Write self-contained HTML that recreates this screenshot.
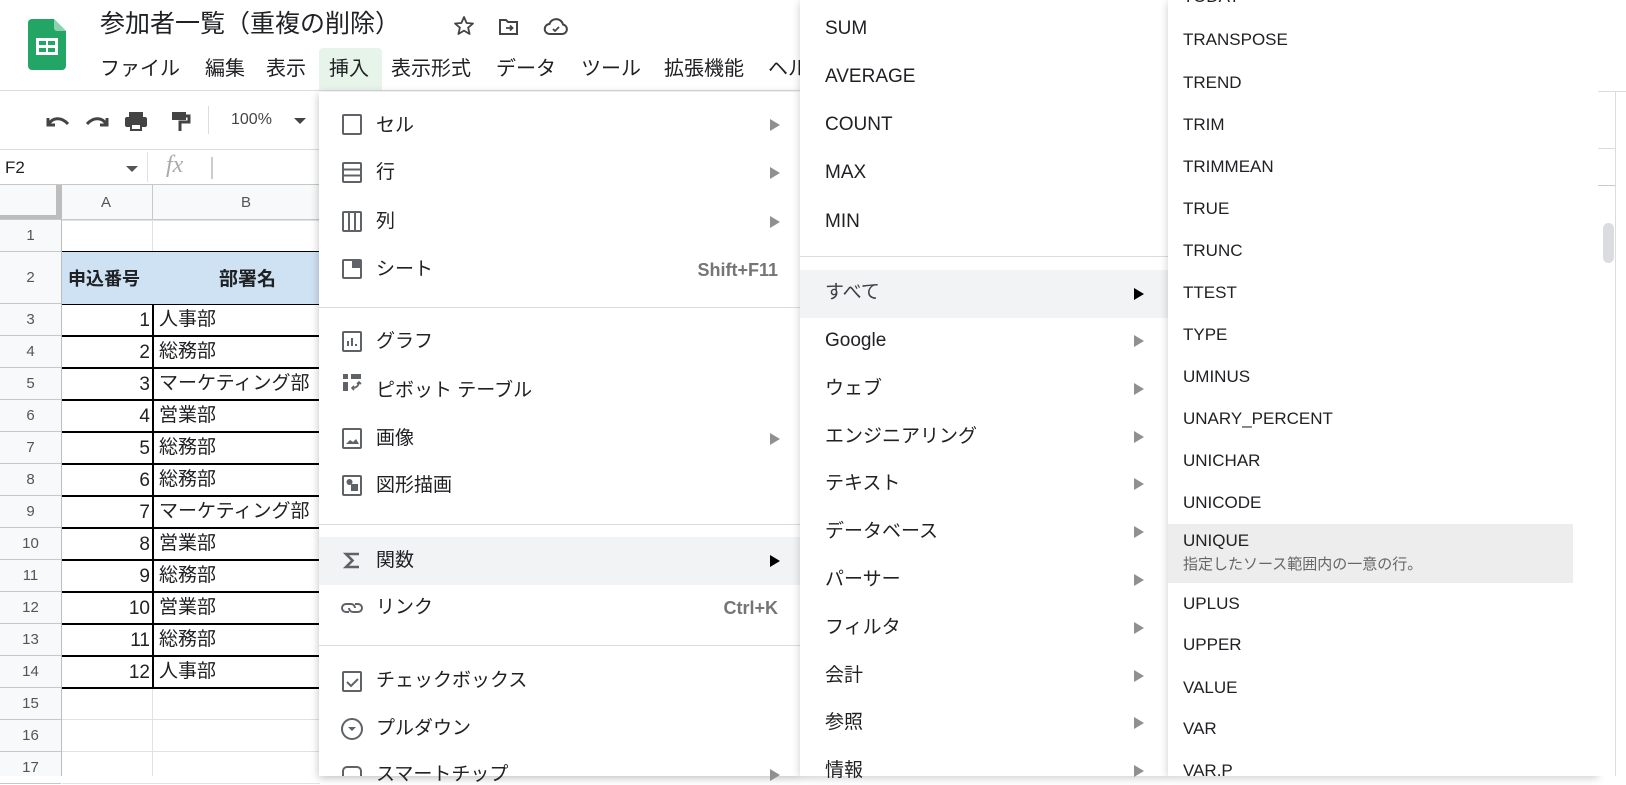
<!DOCTYPE html>
<html><head><meta charset="utf-8"><style>
*{margin:0;padding:0;box-sizing:border-box}
body{width:1626px;height:776px;overflow:hidden;background:#fff;font-family:"Liberation Sans","Noto Sans CJK JP",sans-serif;color:#202124;position:relative}
.a{position:absolute}
.t{position:absolute;white-space:nowrap;line-height:1}
.m1 .t,.m2 .t{font-size:19px}
.m3 .t{font-size:17px;color:#202124}
.arr{position:absolute;width:0;height:0;border-top:6px solid transparent;border-bottom:6px solid transparent;border-left:10px solid #909090}
.sep{position:absolute;left:0;right:0;height:1px;background:#dadce0}
.cell{position:absolute;font-size:19px;line-height:1;white-space:nowrap}
.mb{font-size:20px;top:59px}
</style></head><body>

<!-- header -->
<svg class="a" style="left:28px;top:19px" width="38" height="51" viewBox="0 0 38 51">
<path d="M4 0h22l12 12v35a4 4 0 0 1-4 4H4a4 4 0 0 1-4-4V4a4 4 0 0 1 4-4z" fill="#23a566"/>
<path d="M26 0l12 12H29a3 3 0 0 1-3-3z" fill="#8ed1b1"/>
<rect x="8" y="19" width="22" height="17" fill="#fff"/>
<rect x="11" y="22" width="7" height="4" fill="#23a566"/><rect x="20" y="22" width="7" height="4" fill="#23a566"/>
<rect x="11" y="29" width="7" height="4" fill="#23a566"/><rect x="20" y="29" width="7" height="4" fill="#23a566"/>
</svg>
<div class="t" style="left:100px;top:12px;font-size:25px;color:#202124">参加者一覧（重複の削除）</div>
<svg class="a" style="left:452px;top:14px" width="24" height="24" viewBox="0 0 24 24"><path d="M12 3l2.6 6 6.4.5-4.9 4.2 1.5 6.3L12 16.6 6.4 20l1.5-6.3L3 9.5l6.4-.5z" fill="none" stroke="#444" stroke-width="1.8" stroke-linejoin="round"/></svg>
<svg class="a" style="left:497px;top:15px" width="24" height="24" viewBox="0 0 24 24"><path d="M3 5h6l2 2h9v12H3z" fill="none" stroke="#444" stroke-width="2"/><path d="M9 13h6m-2-2.5l2.5 2.5-2.5 2.5" fill="none" stroke="#444" stroke-width="1.8"/></svg>
<svg class="a" style="left:543px;top:15px" width="26" height="24" viewBox="0 0 26 24"><path d="M7 19a5 5 0 0 1-.5-10A7 7 0 0 1 20 9.5 4.8 4.8 0 0 1 19.5 19z" fill="none" stroke="#444" stroke-width="2"/><path d="M10 14l2 2 4-4" fill="none" stroke="#444" stroke-width="1.8"/></svg>
<div class="a" style="left:319px;top:48px;width:63px;height:43px;background:#e6f4ea;border-radius:4px 4px 0 0"></div>
<div class="t mb" style="left:100px">ファイル</div>
<div class="t mb" style="left:205px">編集</div>
<div class="t mb" style="left:266px">表示</div>
<div class="t mb" style="left:329px">挿入</div>
<div class="t mb" style="left:391px">表示形式</div>
<div class="t mb" style="left:496px">データ</div>
<div class="t mb" style="left:581px">ツール</div>
<div class="t mb" style="left:664px">拡張機能</div>
<div class="t mb" style="left:768px">ヘル</div>
<div class="a" style="left:0;top:90px;width:1626px;height:1px;background:#dadce0"></div>
<div class="a" style="left:1612px;top:30px;width:30px;height:30px;border-radius:50%;background:#f1f1e8"></div>

<!-- toolbar -->
<svg class="a" style="left:44px;top:108px" width="150" height="26" viewBox="0 0 150 26">
<path d="M4 10v7h7M5 16c3-6 12-8 19 0" fill="none" stroke="#444" stroke-width="3"/>
<path d="M63 10v7h-7M62 16c-3-6-12-8-19 0" fill="none" stroke="#444" stroke-width="3"/>
<rect x="85" y="4" width="14" height="5" fill="#444"/><rect x="81" y="9" width="22" height="10" rx="2" fill="#444"/><rect x="86" y="16" width="12" height="7" fill="#444"/><rect x="88" y="17" width="8" height="4" fill="#fff"/>
<rect x="128" y="4" width="14" height="8" fill="#444"/><path d="M142 8h3v6h-9v9" fill="none" stroke="#444" stroke-width="3"/>
</svg>
<div class="a" style="left:208px;top:106px;width:1px;height:28px;background:#dadce0"></div>
<div class="t" style="left:231px;top:112px;font-size:16px;color:#444">100%</div>
<div class="a" style="left:294px;top:118px;border-top:6px solid #444;border-left:6px solid transparent;border-right:6px solid transparent"></div>
<div class="a" style="left:0;top:149px;width:320px;height:1px;background:#dadce0"></div>
<div class="t" style="left:5px;top:159px;font-size:17px">F2</div>
<div class="a" style="left:126px;top:166px;border-top:6px solid #555;border-left:6px solid transparent;border-right:6px solid transparent"></div>
<div class="a" style="left:147px;top:152px;width:1px;height:30px;background:#e0e0e0"></div>
<div class="t" style="left:166px;top:153px;font-size:24px;color:#aaa;font-family:'Liberation Serif',serif;font-style:italic">fx</div>
<div class="a" style="left:211px;top:157px;width:2px;height:22px;background:#ccc"></div>
<div class="a" style="left:0;top:184px;width:320px;height:1px;background:#c8c8c8"></div>

<!-- grid -->
<div class="a" style="left:0;top:185px;width:320px;height:35px;background:#f8f9fa"></div>
<div class="a" style="left:0;top:185px;width:62px;height:591px;background:#f8f9fa"></div>
<div class="a" style="left:56px;top:185px;width:5px;height:35px;background:#bdbdbd"></div>
<div class="a" style="left:0;top:215px;width:61px;height:5px;background:#bdbdbd"></div>
<div class="a" style="left:61px;top:185px;width:1px;height:591px;background:#bdbdbd"></div>
<div class="a" style="left:152px;top:185px;width:1px;height:35px;background:#c8c8c8"></div>
<div class="a" style="left:0;top:219px;width:320px;height:1px;background:#c8c8c8"></div>
<div class="t" style="left:101px;top:195px;font-size:15px;color:#555">A</div>
<div class="t" style="left:241px;top:195px;font-size:15px;color:#555">B</div>
<div id="rows"></div>
<div class="a" style="left:62px;top:252px;width:258px;height:52px;background:#cfe2f3"></div>
<div class="cell" style="left:68px;top:270px;font-weight:bold;font-size:18px">申込番号</div>
<div class="cell" style="left:219px;top:270px;font-weight:bold">部署名</div>

<script>
(function(){
var h='';
function rh(n,top,ht){h+='<div class="t" style="left:0;width:61px;text-align:center;top:'+(top+ht/2-8)+'px;font-size:15px;color:#555">'+n+'</div>';
h+='<div class="a" style="left:0;top:'+(top+ht-1)+'px;width:61px;height:1px;background:#c8c8c8"></div>';}
rh(1,220,32);rh(2,252,52);
var names=['人事部','総務部','マーケティング部','営業部','総務部','総務部','マーケティング部','営業部','総務部','営業部','総務部','人事部'];
for(var i=0;i<15;i++){var top=304+i*32;rh(i+3,top,32);
 if(i<12){h+='<div class="cell" style="right:1476px;top:'+(top+7)+'px">'+(i+1)+'</div><div class="cell" style="left:159px;top:'+(top+6)+'px">'+names[i]+'</div>';}
 else h+='<div class="a" style="left:62px;top:'+(top+31)+'px;width:258px;height:1px;background:#e2e2e2"></div>';
}
h+='<div class="a" style="left:62px;top:220px;width:258px;height:1px;background:#e2e2e2"></div>';
h+='<div class="a" style="left:152px;top:220px;width:1px;height:32px;background:#e2e2e2"></div>';
h+='<div class="a" style="left:152px;top:688px;width:1px;height:88px;background:#e2e2e2"></div>';
for(var k=0;k<14;k++){var y=k==0?251:(k==1?303:303+(k-1)*32);h+='<div class="a" style="left:62px;top:'+y+'px;width:258px;height:2px;background:#000"></div>';}
h+='<div class="a" style="left:62px;top:687px;width:258px;height:2px;background:#000"></div>';
h+='<div class="a" style="left:152px;top:252px;width:2px;height:436px;background:#000"></div>';
document.getElementById('rows').outerHTML=h;
})();
</script>

<!-- menu 1 -->
<div class="a m1" style="left:319px;top:92px;width:481px;height:684px;background:#fff;box-shadow:0 2px 8px rgba(0,0,0,.25)">
<div class="sep" style="top:215px"></div>
<div class="sep" style="top:432px"></div>
<div class="a" style="left:0;top:445px;width:481px;height:48px;background:#f1f3f4"></div>
<div class="sep" style="top:553px"></div>
<svg class="a" style="left:22px;top:0" width="24" height="684" viewBox="0 0 24 684" fill="none" stroke="#5f6368" stroke-width="2">
<rect x="2" y="23" width="18" height="19" rx="1"/>
<rect x="2" y="71" width="18" height="19" rx="1"/><path d="M2 77.5h18M2 83.5h18"/>
<rect x="2" y="120" width="18" height="19" rx="1"/><path d="M8 120v19M14 120v19"/>
<rect x="2" y="168" width="18" height="18" rx="1"/><rect x="11" y="169" width="8" height="7" fill="#5f6368" stroke="none"/>
<rect x="2" y="240" width="18" height="19" rx="1"/><path d="M7 254v-5M11 254v-8M15 254v-2" stroke-width="2"/>
<path d="M2 282h5v5H2zM10 282h10v5H10zM2 290h5v9H2z" fill="#5f6368" stroke="none"/><path d="M11 296c3 0 6-1 7-5M16 292l2-2 2 2M13 294l-2 2 2 2" stroke-width="1.6"/>
<rect x="2" y="337" width="18" height="19" rx="1"/><path d="M5 352l4-4 3 2 3-3 3 5z" fill="#5f6368" stroke="none"/>
<rect x="2" y="384" width="18" height="19" rx="1"/><circle cx="8.5" cy="390" r="3" fill="#5f6368" stroke="none"/><rect x="10" y="392" width="7" height="7" fill="#5f6368" stroke="none"/>
<path d="M18 462H5l6.5 6.5L5 475h13" stroke-width="2.6"/>
<path d="M8 520H5a4 4 0 0 1 0-8h5a4 4 0 0 1 4 4M14 512h3a4 4 0 0 1 0 8h-5a4 4 0 0 1-4-4"/>
<rect x="2" y="580" width="18" height="19" rx="1"/><path d="M6 590l4 4 7-7"/>
<circle cx="11" cy="637" r="10"/><path d="M7 635h8l-4 4z" fill="#5f6368" stroke="none"/>
<rect x="2" y="675" width="18" height="14" rx="4"/>
</svg>
<div class="t" style="left:57px;top:24px">セル</div><div class="arr" style="left:451px;top:27px"></div>
<div class="t" style="left:57px;top:71px">行</div><div class="arr" style="left:451px;top:75px"></div>
<div class="t" style="left:57px;top:120px">列</div><div class="arr" style="left:451px;top:124px"></div>
<div class="t" style="left:57px;top:168px">シート</div><div class="t" style="right:22px;top:169px;font-weight:bold;color:#757575;font-size:18px">Shift+F11</div>
<div class="t" style="left:57px;top:240px">グラフ</div>
<div class="t" style="left:57px;top:289px">ピボット テーブル</div>
<div class="t" style="left:57px;top:337px">画像</div><div class="arr" style="left:451px;top:341px"></div>
<div class="t" style="left:57px;top:384px">図形描画</div>
<div class="t" style="left:57px;top:459px">関数</div><div class="arr" style="left:451px;top:463px;border-left-color:#000"></div>
<div class="t" style="left:57px;top:506px">リンク</div><div class="t" style="right:22px;top:507px;font-weight:bold;color:#757575;font-size:18px">Ctrl+K</div>
<div class="t" style="left:57px;top:579px">チェックボックス</div>
<div class="t" style="left:57px;top:627px">プルダウン</div>
<div class="t" style="left:57px;top:673px">スマートチップ</div><div class="arr" style="left:451px;top:677px"></div>
</div>

<!-- menu 2 -->
<div class="a m2" style="left:800px;top:0;width:368px;height:776px;background:#fff;box-shadow:0 2px 8px rgba(0,0,0,.2)">
<div class="t" style="left:25px;top:19px">SUM</div>
<div class="t" style="left:25px;top:67px">AVERAGE</div>
<div class="t" style="left:25px;top:115px">COUNT</div>
<div class="t" style="left:25px;top:163px">MAX</div>
<div class="t" style="left:25px;top:212px">MIN</div>
<div class="sep" style="top:256px"></div>
<div class="a" style="left:0;top:270px;width:368px;height:48px;background:#f1f3f4"></div>
<div class="t" style="left:25px;top:283px;color:#3c4043">すべて</div><div class="arr" style="left:334px;top:288px;border-left-color:#000"></div>
<div id="m2"></div>
</div>

<!-- menu 3 -->
<div class="a m3" style="left:1168px;top:0;width:430px;height:776px;background:#fff;box-shadow:0 2px 8px rgba(0,0,0,.2)">
<div class="a" style="left:0;top:524px;width:405px;height:59px;background:#ededed"></div>
<div id="m3"></div>
<div class="t" style="left:15px;top:532px">UNIQUE</div>
<div class="t" style="left:15px;top:557px;font-size:15px;color:#666">指定したソース範囲内の一意の行。</div>
</div>
<div class="a" style="left:1598px;top:0;width:28px;height:776px;background:#fff"></div>
<div class="a" style="left:1598px;top:91px;width:28px;height:1px;background:#dadce0"></div>
<div class="a" style="left:1615px;top:91px;width:1px;height:685px;background:#dadce0"></div>
<div class="a" style="left:1603px;top:223px;width:11px;height:40px;border-radius:6px;background:#dadce0"></div>
<div class="a" style="left:1598px;top:148px;width:17px;height:1px;background:#dadce0"></div>
<div class="a" style="left:1598px;top:185px;width:17px;height:1px;background:#c8c8c8"></div>

<script>
var a=['Google','ウェブ','エンジニアリング','テキスト','データベース','パーサー','フィルタ','会計','参照','情報'],h='';
for(var i=0;i<a.length;i++){var y=341+i*47.8;h+='<div class="t" style="left:25px;top:'+(y-10)+'px">'+a[i]+'</div><div class="arr" style="left:334px;top:'+(y-6)+'px"></div>';}
document.getElementById('m2').outerHTML=h;
var b=[['TODAY',-3],['TRANSPOSE',40],['TREND',83],['TRIM',125],['TRIMMEAN',167],['TRUE',209],['TRUNC',251],['TTEST',293],['TYPE',335],['UMINUS',377],['UNARY_PERCENT',419],['UNICHAR',461],['UNICODE',503],['UPLUS',604],['UPPER',645],['VALUE',688],['VAR',729],['VAR.P',771]];h='';
for(var j=0;j<b.length;j++)h+='<div class="t" style="left:15px;top:'+(b[j][1]-9)+'px">'+b[j][0]+'</div>';
document.getElementById('m3').outerHTML=h;
</script>
</body></html>
